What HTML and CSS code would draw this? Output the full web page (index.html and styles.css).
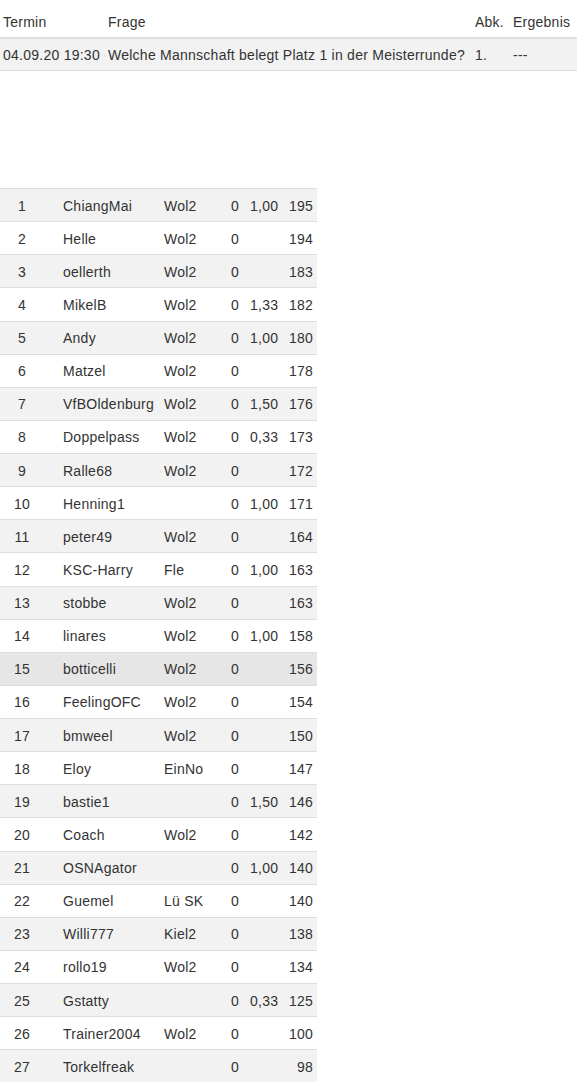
FILE: index.html
```html
<!DOCTYPE html>
<html lang="de">
<head>
<meta charset="utf-8">
<title>Tipp</title>
<link rel="stylesheet" href="styles.css">
</head>
<body>
<table class="q-table">
  <colgroup>
    <col class="c-termin"><col class="c-frage"><col class="c-abk"><col class="c-erg">
  </colgroup>
  <thead>
    <tr><th>Termin</th><th>Frage</th><th>Abk.</th><th>Ergebnis</th></tr>
  </thead>
  <tbody>
    <tr><td>04.09.20 19:30</td><td>Welche Mannschaft belegt Platz 1 in der Meisterrunde?</td><td>1.</td><td>---</td></tr>
  </tbody>
</table>

<table class="rank-table">
  <colgroup>
    <col class="r-pos"><col class="r-name"><col class="r-club"><col class="r-zero"><col class="r-avg"><col class="r-pts">
  </colgroup>
  <tbody>
    <tr><td class="pos">1</td><td class="name">ChiangMai</td><td>Wol2</td><td>0</td><td>1,00</td><td class="pts">195</td></tr>
    <tr><td class="pos">2</td><td class="name">Helle</td><td>Wol2</td><td>0</td><td></td><td class="pts">194</td></tr>
    <tr><td class="pos">3</td><td class="name">oellerth</td><td>Wol2</td><td>0</td><td></td><td class="pts">183</td></tr>
    <tr><td class="pos">4</td><td class="name">MikelB</td><td>Wol2</td><td>0</td><td>1,33</td><td class="pts">182</td></tr>
    <tr><td class="pos">5</td><td class="name">Andy</td><td>Wol2</td><td>0</td><td>1,00</td><td class="pts">180</td></tr>
    <tr><td class="pos">6</td><td class="name">Matzel</td><td>Wol2</td><td>0</td><td></td><td class="pts">178</td></tr>
    <tr><td class="pos">7</td><td class="name">VfBOldenburg</td><td>Wol2</td><td>0</td><td>1,50</td><td class="pts">176</td></tr>
    <tr><td class="pos">8</td><td class="name">Doppelpass</td><td>Wol2</td><td>0</td><td>0,33</td><td class="pts">173</td></tr>
    <tr><td class="pos">9</td><td class="name">Ralle68</td><td>Wol2</td><td>0</td><td></td><td class="pts">172</td></tr>
    <tr><td class="pos">10</td><td class="name">Henning1</td><td></td><td>0</td><td>1,00</td><td class="pts">171</td></tr>
    <tr><td class="pos">11</td><td class="name">peter49</td><td>Wol2</td><td>0</td><td></td><td class="pts">164</td></tr>
    <tr><td class="pos">12</td><td class="name">KSC-Harry</td><td>Fle</td><td>0</td><td>1,00</td><td class="pts">163</td></tr>
    <tr><td class="pos">13</td><td class="name">stobbe</td><td>Wol2</td><td>0</td><td></td><td class="pts">163</td></tr>
    <tr><td class="pos">14</td><td class="name">linares</td><td>Wol2</td><td>0</td><td>1,00</td><td class="pts">158</td></tr>
    <tr class="me"><td class="pos">15</td><td class="name">botticelli</td><td>Wol2</td><td>0</td><td></td><td class="pts">156</td></tr>
    <tr><td class="pos">16</td><td class="name">FeelingOFC</td><td>Wol2</td><td>0</td><td></td><td class="pts">154</td></tr>
    <tr><td class="pos">17</td><td class="name">bmweel</td><td>Wol2</td><td>0</td><td></td><td class="pts">150</td></tr>
    <tr><td class="pos">18</td><td class="name">Eloy</td><td>EinNo</td><td>0</td><td></td><td class="pts">147</td></tr>
    <tr><td class="pos">19</td><td class="name">bastie1</td><td></td><td>0</td><td>1,50</td><td class="pts">146</td></tr>
    <tr><td class="pos">20</td><td class="name">Coach</td><td>Wol2</td><td>0</td><td></td><td class="pts">142</td></tr>
    <tr><td class="pos">21</td><td class="name">OSNAgator</td><td></td><td>0</td><td>1,00</td><td class="pts">140</td></tr>
    <tr><td class="pos">22</td><td class="name">Guemel</td><td>Lü SK</td><td>0</td><td></td><td class="pts">140</td></tr>
    <tr><td class="pos">23</td><td class="name">Willi777</td><td>Kiel2</td><td>0</td><td></td><td class="pts">138</td></tr>
    <tr><td class="pos">24</td><td class="name">rollo19</td><td>Wol2</td><td>0</td><td></td><td class="pts">134</td></tr>
    <tr><td class="pos">25</td><td class="name">Gstatty</td><td></td><td>0</td><td>0,33</td><td class="pts">125</td></tr>
    <tr><td class="pos">26</td><td class="name">Trainer2004</td><td>Wol2</td><td>0</td><td></td><td class="pts">100</td></tr>
    <tr><td class="pos">27</td><td class="name">Torkelfreak</td><td></td><td>0</td><td></td><td class="pts">98</td></tr>
  </tbody>
</table>
</body>
</html>
```

FILE: styles.css
```css
html, body {
  margin: 0;
  padding: 0;
  background: #fff;
}
body {
  font-family: "Liberation Sans", Arial, sans-serif;
  font-size: 14px;
  line-height: 20px;
  letter-spacing: 0.25px;
  color: #333;
}
table {
  border-collapse: separate;
  border-spacing: 0;
  table-layout: fixed;
}
td, th {
  padding: 0 0 0 3px;
  text-align: left;
  font-weight: normal;
  white-space: nowrap;
  box-sizing: border-box;
}

/* question table */
.q-table {
  width: 577px;
}
.c-termin { width: 105px; }
.c-frage { width: 367px; }
.c-abk { width: 38px; }
.c-erg { width: 67px; }
.q-table th {
  height: 39px;
  padding-bottom: 5px;
  vertical-align: bottom;
  border-bottom: 2px solid #ddd;
}
.q-table tbody td {
  height: 32px;
  vertical-align: middle;
  background: #f2f2f2;
  border-bottom: 1px solid #ddd;
}

/* ranking table */
.rank-table {
  width: 317px;
  margin-top: 117px;
}
.r-pos { width: 44px; }
.r-name { width: 115px; }
.r-club { width: 67px; }
.r-zero { width: 19px; }
.r-avg { width: 37px; }
.r-pts { width: 35px; }
.rank-table td {
  height: 33.125px;
  padding: 1px 5px 0;
  vertical-align: middle;
  border-top: 1px solid #ddd;
  overflow: hidden;
}
.rank-table td.pos { text-align: center; }
.rank-table td.name { padding-left: 19px; }
.rank-table td.pts { text-align: right; padding-right: 4px; }
.rank-table tr:nth-child(odd) td { background: #f2f2f2; }
.rank-table tr.me td { background: #e6e6e6; }
```
